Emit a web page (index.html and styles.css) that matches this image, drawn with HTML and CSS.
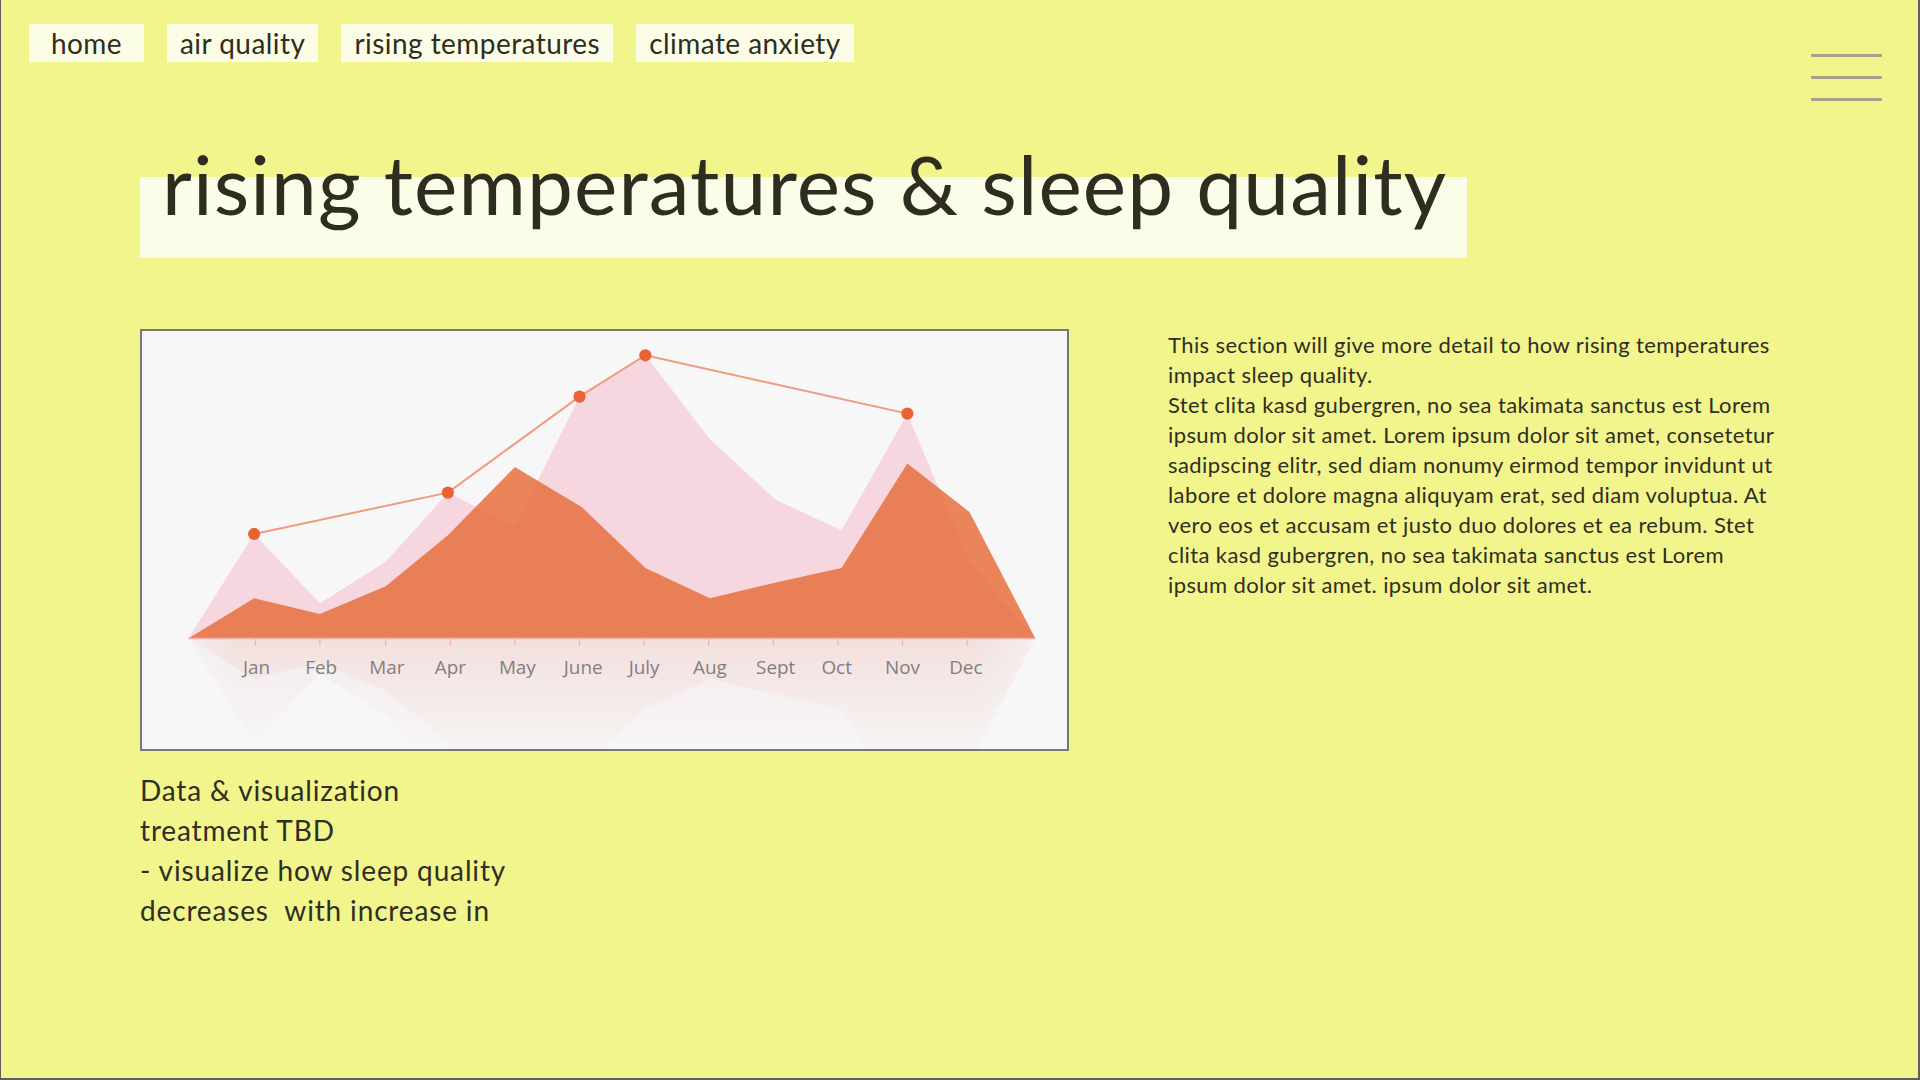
FILE: index.html
```html
<!DOCTYPE html>
<html lang="en">
<head>
<meta charset="utf-8">
<title>rising temperatures &amp; sleep quality</title>
<link rel="stylesheet" href="styles.css">
</head>
<body>
<div class="frame">
  <header class="topbar">
    <nav class="nav">
      <a class="nav-item nav-home" href="#">home</a>
      <a class="nav-item" href="#">air quality</a>
      <a class="nav-item" href="#">rising temperatures</a>
      <a class="nav-item" href="#">climate anxiety</a>
    </nav>
    <button class="menu" aria-label="menu">
      <span class="menu-line"></span>
      <span class="menu-line"></span>
      <span class="menu-line"></span>
    </button>
  </header>

  <main class="content">
    <h1 class="title">rising temperatures &amp; sleep quality</h1>

    <section class="row">
      <div class="left-col">
        <div class="chart">
          <svg class="chart-svg" viewBox="0 0 759 344" preserveAspectRatio="none">
            <defs>
              <linearGradient id="fade" x1="0" y1="0" x2="0" y2="1">
                <stop offset="0" stop-color="#f7f7f7" stop-opacity="0"/>
                <stop offset="1" stop-color="#f7f7f7" stop-opacity="0.85"/>
              </linearGradient>
              <linearGradient id="fadeSide" x1="0" y1="0" x2="1" y2="0">
                <stop offset="0" stop-color="#f7f7f7" stop-opacity="1"/>
                <stop offset="0.1" stop-color="#f7f7f7" stop-opacity="0"/>
                <stop offset="0.9" stop-color="#f7f7f7" stop-opacity="0"/>
                <stop offset="1" stop-color="#f7f7f7" stop-opacity="1"/>
              </linearGradient>
            </defs>
            <rect x="0" y="0" width="759" height="344" fill="#f7f7f7"/>
            <!-- reflection -->
            <g transform="translate(0,506) scale(1,-1)" opacity="0.35">
              <path d="M38,253 L92,167 L146,224 L200,190 L251,133 L306,161 L359,54 L413,20 L466,89 L520,139 L574,164 L628,68 L679,190 L733,253 Z" fill="#f2d6dc"/>
              <path d="M38,253 L92,220 L146,233 L200,210 L251,168 L306,112 L361,145 L413,195 L466,220 L520,207 L574,195 L628,109 L679,149 L733,253 Z" fill="#eab8b2"/>
            </g>
            <rect x="0" y="253" width="759" height="91" fill="url(#fade)"/>
            <rect x="0" y="253" width="759" height="91" fill="url(#fadeSide)"/>
            <!-- areas -->
            <path d="M38,253 L92,167 L146,224 L200,190 L251,133 L306,161 L359,54 L413,20 L466,89 L520,139 L574,164 L628,68 L679,190 L733,253 Z" fill="#f6d6df"/>
            <path d="M38,253 L92,220 L146,233 L200,210 L251,168 L306,112 L361,145 L413,195 L466,220 L520,207 L574,195 L628,109 L679,149 L733,253 Z" fill="#e6703f" fill-opacity="0.85"/>
            <line x1="38" y1="253" x2="733" y2="253" stroke="#f4b3a8" stroke-width="1.2"/>
            <g stroke="#f4b3a8" stroke-width="1">
              <line x1="93" y1="253" x2="93" y2="259"/>
              <line x1="146" y1="253" x2="146" y2="259"/>
              <line x1="200" y1="253" x2="200" y2="259"/>
              <line x1="253" y1="253" x2="253" y2="259"/>
              <line x1="306" y1="253" x2="306" y2="259"/>
              <line x1="359" y1="253" x2="359" y2="259"/>
              <line x1="412" y1="253" x2="412" y2="259"/>
              <line x1="465" y1="253" x2="465" y2="259"/>
              <line x1="518" y1="253" x2="518" y2="259"/>
              <line x1="571" y1="253" x2="571" y2="259"/>
              <line x1="624" y1="253" x2="624" y2="259"/>
              <line x1="677" y1="253" x2="677" y2="259"/>
            </g>
            <!-- line series -->
            <polyline points="92,167 251,133 359,54 413,20 628,68" fill="none" stroke="#f09a7e" stroke-width="1.6"/>
            <g fill="#ea6335">
              <circle cx="92" cy="167" r="5"/>
              <circle cx="251" cy="133" r="5"/>
              <circle cx="359" cy="54" r="5"/>
              <circle cx="413" cy="20" r="5"/>
              <circle cx="628" cy="68" r="5"/>
            </g>
            <g class="axis-label" text-anchor="middle">
              <text x="94" y="282">Jan</text>
              <text x="147" y="282">Feb</text>
              <text x="201" y="282">Mar</text>
              <text x="253" y="282">Apr</text>
              <text x="308" y="282">May</text>
              <text x="362" y="282">June</text>
              <text x="412" y="282">July</text>
              <text x="466" y="282">Aug</text>
              <text x="520" y="282">Sept</text>
              <text x="570" y="282">Oct</text>
              <text x="624" y="282">Nov</text>
              <text x="676" y="282">Dec</text>
            </g>
          </svg>
        </div>
        <p class="caption">Data &amp; visualization<br>treatment TBD<br>- visualize how sleep quality<br>decreases&nbsp; with increase in</p>
      </div>
      <div class="right-col">
        <p class="body-text">This section will give more detail to how rising temperatures<br>impact sleep quality.<br>Stet clita kasd gubergren, no sea takimata sanctus est Lorem<br>ipsum dolor sit amet. Lorem ipsum dolor sit amet, consetetur<br>sadipscing elitr, sed diam nonumy eirmod tempor invidunt ut<br>labore et dolore magna aliquyam erat, sed diam voluptua. At<br>vero eos et accusam et justo duo dolores et ea rebum. Stet<br>clita kasd gubergren, no sea takimata sanctus est Lorem<br>ipsum dolor sit amet. ipsum dolor sit amet.</p>
      </div>
    </section>
  </main>
</div>
</body>
</html>
```

FILE: styles.css
```css
* { box-sizing: border-box; }

html, body {
  margin: 0;
  padding: 0;
  background: #f2f48c;
}

.frame {
  width: 1920px;
  height: 1080px;
  background: #f2f48c;
  border-left: 1px solid #5e5e5e;
  border-right: 2px solid #5e5e5e;
  border-bottom: 2px solid #5e5e5e;
  font-family: Lato, "Open Sans", sans-serif;
  color: #2e2d22;
  overflow: hidden;
}

.topbar {
  display: flex;
  align-items: flex-start;
  height: 62px;
  padding: 24px 36px 0 28px;
}

.nav {
  display: flex;
  gap: 23px;
}

.nav-item {
  display: flex;
  align-items: center;
  justify-content: center;
  height: 38px;
  padding: 0 13px;
  background: #fbfde7;
  color: #2e2d22;
  text-decoration: none;
  font-size: 28px;
  letter-spacing: 0.45px;
}

.nav-home {
  min-width: 115px;
}

.menu {
  margin-left: auto;
  margin-top: 30px;
  width: 71px;
  display: flex;
  flex-direction: column;
  gap: 19px;
  padding: 0;
  border: 0;
  background: transparent;
}

.menu-line {
  display: block;
  height: 3px;
  background: #a8a08c;
  border-radius: 1px;
}

.content {
  padding-left: 139px;
}

.title {
  margin: 72px 0 0 0;
  width: 1327px;
  height: 124px;
  padding-left: 22px;
  font-size: 82px;
  font-weight: 400;
  line-height: 98px;
  letter-spacing: 1.1px;
  color: #2e2d20;
  background: linear-gradient(to bottom, transparent 0, transparent 43px, #fafde8 43px, #fafde8 100%);
}

.row {
  display: flex;
  align-items: flex-start;
  gap: 99px;
  margin-top: 71px;
}

.left-col {
  display: flex;
  flex-direction: column;
}

.chart {
  width: 929px;
  height: 422px;
  border: 2px solid #777;
  background: #f7f7f7;
}

.chart-svg {
  display: block;
  width: 100%;
  height: 100%;
}

.axis-label {
  font-family: "Open Sans", "Noto Sans", sans-serif;
  font-size: 15.5px;
  fill: #837e7e;
}

.caption {
  margin: 19px 0 0 0;
  font-size: 28px;
  line-height: 40px;
  letter-spacing: 0.85px;
  color: #2f2e22;
}

.right-col {
  padding-top: 1px;
}

.body-text {
  margin: 0;
  font-size: 22px;
  line-height: 30px;
  letter-spacing: 0.4px;
  color: #2f2e22;
  white-space: nowrap;
}
```
